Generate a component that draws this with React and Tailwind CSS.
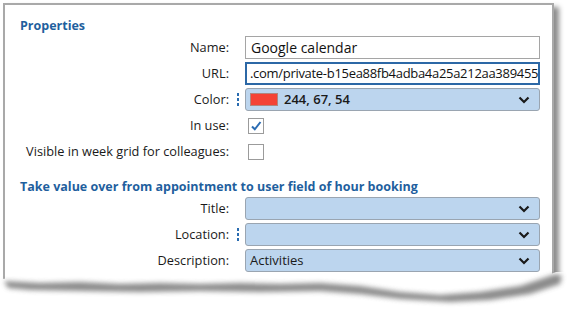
import React from 'react'

const font = { fontFamily: '"Open Sans", "Noto Sans", sans-serif' }

function Chevron() {
  return (
    <svg width="12" height="8" viewBox="0 0 12 8" className="shrink-0">
      <path d="M1.5 1.5 L6 6 L10.5 1.5" fill="none" stroke="#1a1a1a" strokeWidth="2.2" />
    </svg>
  )
}

function Dots() {
  return (
    <div className="flex flex-col gap-[2px] w-[2px]">
      <span className="block w-[2px] h-[3px] bg-[#2a6cb0]" />
      <span className="block w-[2px] h-[3px] bg-[#2a6cb0]" />
      <span className="block w-[2px] h-[3px] bg-[#2a6cb0]" />
    </div>
  )
}

function Row({ label, dots, children }) {
  return (
    <div className="flex items-center h-[26px]">
      <div className="w-[224px] text-right text-[12.75px] text-[#1a1a1a] whitespace-nowrap">{label}</div>
      <div className="w-[16px] flex justify-center pl-[2px]">{dots && <Dots />}</div>
      <div className="w-[295px] flex items-center">{children}</div>
    </div>
  )
}

function Select({ children }) {
  return (
    <div className="w-full h-[23px] flex items-center bg-[#bcd5ee] border border-[#9aa5b1] rounded-[3px] pl-[4px] pr-[9px] text-[13px] text-[#1a1a1a]">
      <div className="flex-1 flex items-center gap-[6px]">{children}</div>
      <Chevron />
    </div>
  )
}

function Checkbox({ checked }) {
  return (
    <div className="ml-[3px] w-[16px] h-[16px] border border-[#9b9b9b] bg-white flex items-center justify-center">
      {checked && (
        <svg width="12" height="12" viewBox="0 0 12 12">
          <path d="M2 6.5 L4.8 9.3 L10.5 2" fill="none" stroke="#2b6cb3" strokeWidth="2" />
        </svg>
      )}
    </div>
  )
}

const edge =
  'L0 17 L20 16 L40 19 L60 17 L80 18 L100 16 L120 20 L140 18 L160 19 L180 17 L200 20 L220 18 L240 19 L260 17 L280 20 L300 18 L320 19 L340 18 L360 22 L380 24 L400 28 L420 29 L440 31 L460 30 L480 28 L500 26 L520 22 L540 16 L556 10 L569 10'

export default function App() {
  return (
    <div className="w-[569px] h-[317px] bg-white relative overflow-hidden" style={font}>
      {/* panel */}
      <div className="absolute left-[3px] top-[3px] w-[551px] h-[300px] border-2 border-b-0 border-[#a9a9a9] bg-white shadow-[5px_4px_5px_rgba(0,0,0,0.45)]">
        <div className="pt-[12px] pl-[15px] text-[12.5px] font-bold text-[#1f5f9e]">Properties</div>
        <div className="-mt-[1px]">
          <Row label="Name:">
            <div className="w-full h-[23px] border border-[#a5a5a5] flex items-center pl-[5px] text-[14px] text-[#111]">
              Google calendar
            </div>
          </Row>
          <Row label="URL:">
            <div className="w-full h-[23px] border-2 border-[#2c68a6] flex items-center pl-[3px] text-[13px] tracking-[-0.3px] text-[#111] overflow-hidden whitespace-nowrap">
              .com/private-b15ea88fb4adba4a25a212aa389455
            </div>
          </Row>
          <Row label="Color:" dots>
            <Select>
              <span className="block w-[28px] h-[13px] bg-[#f44336] border border-[#b0867f]" />
              <span className="font-semibold">244, 67, 54</span>
            </Select>
          </Row>
          <Row label="In use:">
            <Checkbox checked />
          </Row>
          <Row label="Visible in week grid for colleagues:">
            <Checkbox />
          </Row>
        </div>
        <div className="mt-[13px] pl-[15px] text-[12.5px] font-bold text-[#1f5f9e]">
          Take value over from appointment to user field of hour booking
        </div>
        <div className="-mt-[1px]">
          <Row label="Title:">
            <Select />
          </Row>
          <Row label="Location:" dots>
            <Select />
          </Row>
          <Row label="Description:">
            <Select>
              <span>Activities</span>
            </Select>
          </Row>
        </div>
      </div>
      {/* torn bottom edge */}
      <svg className="absolute left-0 top-[262px]" width="569" height="55" viewBox="0 0 569 55">
        <defs>
          <filter id="blur" x="-10%" y="-60%" width="120%" height="220%">
            <feGaussianBlur stdDeviation="2.5" />
          </filter>
        </defs>
        <path d={`M0 55 ${edge} L569 55 Z`} fill="white" />
        <path
          d="M4 19 L40 21 L80 20 L120 22 L160 21 L200 22 L240 21 L280 22 L320 21 L360 24 L400 30 L440 33 L480 30 L520 24 L556 12 L562 14 L560 22 L530 32 L490 38 L450 40 L400 37 L360 32 L320 29 L260 30 L200 29 L140 30 L80 29 L30 28 L8 26 Z"
          fill="#6e6e6e"
          filter="url(#blur)"
          opacity="0.8"
        />
      </svg>
    </div>
  )
}
